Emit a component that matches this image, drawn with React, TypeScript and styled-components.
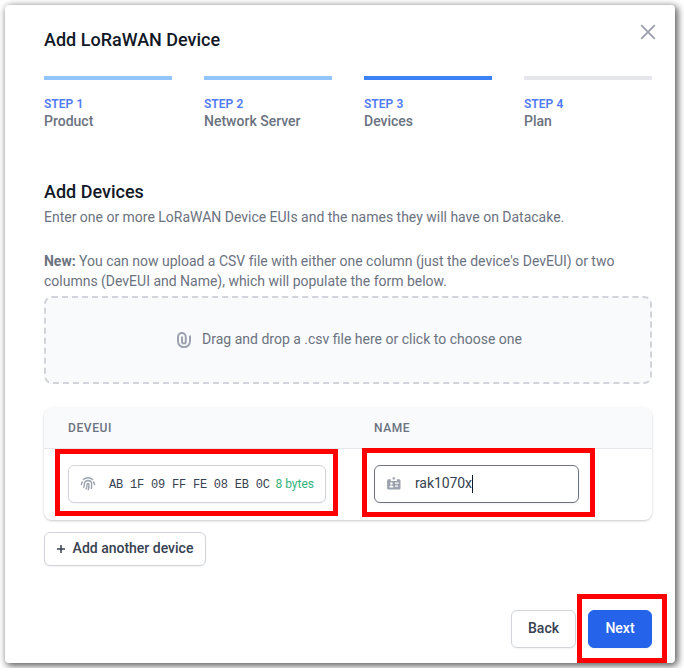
import React from "react";
import styled, { createGlobalStyle } from "styled-components";

const GlobalStyle = createGlobalStyle`
  *, *::before, *::after { box-sizing: border-box; }
  body {
    margin: 0;
    background: #fff;
    color: #6b7280;
    font: 400 14px/20px Roboto, sans-serif;
    overflow: hidden;
  }
`;

const Modal = styled.main`
  position: relative;
  width: 670px;
  height: 658px;
  margin: 5px;
  padding: 25px 23px 0 39px;
  border-radius: 4px;
  background: #fff;
  box-shadow: 2px 2px 7px 1px rgba(0, 0, 0, 0.62);
`;

const Header = styled.header`
  display: flex;
  justify-content: space-between;
  height: 46px;
`;

const Heading = styled.h2`
  margin: 0;
  color: #111827;
  font-size: 18px;
  font-weight: 500;
  line-height: 20px;
`;

const CloseButton = styled.button`
  width: 24px;
  height: 24px;
  margin: -10px -8px 0 0;
  padding: 0;
  border: 0;
  background: none;
  color: #9ca3af;

  svg { display: block; }
`;

const Steps = styled.ol`
  display: grid;
  grid-template-columns: repeat(4, 128px);
  column-gap: 32px;
  margin: 0;
  padding: 0;
  list-style: none;
`;

const stepColors = { done: "#93c5fd", current: "#3b82f6", upcoming: "#e5e7eb" };

const Step = styled.li<{ $state: keyof typeof stepColors }>`
  display: flex;
  flex-direction: column;
  height: 106px;
  padding-top: 16px;
  border-top: 4px solid ${(p) => stepColors[p.$state]};
  font-weight: 500;
  line-height: 18px;
`;

const StepNumber = styled.span`
  color: #4f7bf5;
  font-size: 12px;
  font-weight: 600;
  letter-spacing: 0.05px;
  line-height: 16px;
`;

const Paragraph = styled.p<{ $gap?: number }>`
  margin: ${(p) => p.$gap ?? 0}px 0 0;
  letter-spacing: -0.01px;
  line-height: 20px;
`;

const Dropzone = styled.div`
  display: flex;
  align-items: center;
  justify-content: center;
  width: 608px;
  height: 88px;
  margin-top: 5px;
  padding: 0 0 2px 2px;
  gap: 10px;
  border: 2px dashed #d1d5db;
  border-radius: 8px;
  background: #f9fafb;

  svg { margin-top: 1px; color: #9ca3af; }
`;

const DeviceTable = styled.section`
  width: 608px;
  height: 112px;
  margin-top: 24px;
  border-radius: 8px;
  overflow: hidden;
  box-shadow: 0 1px 3px rgba(0, 0, 0, 0.12), 0 1px 2px rgba(0, 0, 0, 0.1);
`;

const HeadRow = styled.div`
  display: grid;
  grid-template-columns: 306px 1fr;
  height: 41px;
  padding: 0 24px;
  border-bottom: 1px solid #e5e7eb;
  background: #f9fafb;
  font-size: 12px;
  font-weight: 500;
  letter-spacing: 0.6px;
  line-height: 40px;
`;

const DeviceRow = styled.div`
  display: grid;
  grid-template-columns: 258px 205px;
  column-gap: 48px;
  padding: 16px 24px;
`;

const Field = styled.label<{ $focused?: boolean }>`
  display: flex;
  align-items: center;
  height: 38px;
  padding: 0 11px;
  border: 1px solid ${(p) => (p.$focused ? "#6b7280" : "#d1d5db")};
  border-radius: 6px;
  background: #fff;
  box-shadow: 0 1px 2px rgba(0, 0, 0, 0.05);
  color: #374151;

  svg { flex: none; color: #9ca3af; }
`;

const Eui = styled.span`
  width: 167px;
  margin: 1px 0 0 13px;
  font: 12px/20px "Liberation Mono", monospace;
  letter-spacing: -0.21px;
  white-space: pre;
`;

const ByteCount = styled.span`
  color: #31b47d;
  font-size: 12px;
  white-space: nowrap;
`;

const NameValue = styled.span`
  height: 18px;
  margin-left: 13px;
  border-right: 1px solid #111827;
  letter-spacing: -0.1px;
  line-height: 17px;
`;

const Button = styled.button<{ $primary?: boolean; $width: number; $height?: number }>`
  display: flex;
  align-items: center;
  justify-content: center;
  width: ${(p) => p.$width}px;
  height: ${(p) => p.$height ?? 38}px;
  padding: 0 0 2px;
  gap: 8px;
  border: 1px solid ${(p) => (p.$primary ? "#2563eb" : "#d1d5db")};
  border-radius: 6px;
  background: ${(p) => (p.$primary ? "#2563eb" : "#fff")};
  box-shadow: 0 1px 2px rgba(0, 0, 0, 0.05);
  color: ${(p) => (p.$primary ? "#fff" : "#374151")};
  font: 500 14px/20px Roboto, sans-serif;

  svg { margin-top: 2px; }
`;

const AddRow = styled.div`
  padding-top: 12px;
`;

const Footer = styled.footer`
  display: flex;
  justify-content: flex-end;
  gap: 12px;
  width: 608px;
  margin-top: 44px;
`;

const Highlight = styled.div<{ $x: number; $y: number; $w: number; $h: number }>`
  position: absolute;
  left: ${(p) => p.$x}px;
  top: ${(p) => p.$y}px;
  width: ${(p) => p.$w}px;
  height: ${(p) => p.$h}px;
  border: 5px solid #f00;
  pointer-events: none;
`;

const CloseIcon = () => (
  <svg width="24" height="24" viewBox="0 0 24 24" fill="none" stroke="currentColor" strokeWidth="1.9">
    <path d="M5.2 5.2 18.8 18.8M18.8 5.2 5.2 18.8" />
  </svg>
);

const ClipIcon = () => (
  <svg width="16" height="16" viewBox="0 0 16 16" fill="none" stroke="currentColor" strokeWidth="2" strokeLinecap="round">
    <path d="M14 4.2v5.1a6 6 0 0 1-12 0V5a3.9 3.9 0 0 1 7.8 0v4.6a1.9 1.9 0 0 1-3.8 0V5.3" />
  </svg>
);

const FingerprintIcon = () => (
  <svg width="16" height="16" viewBox="0 0 16 16" fill="none" stroke="currentColor" strokeWidth="1.4" strokeLinecap="round">
    <path d="M3.4 3.5a7 7 0 0 1 9.2 0M1.4 8.5a6.8 6.8 0 0 1 1-2.5M14.6 8.5a6.8 6.8 0 0 0-1-2.5M3.7 11.2c.5-1 .7-2 .7-3A3.7 3.7 0 0 1 8 4.5c2.1 0 3.7 1.6 3.7 3.7 0 1.7-.1 2.9-.4 4.2M6.1 12.9c.7-1.4.9-2.8.9-4.5 0-1.3 2-1.3 2 0 0 2-.2 3.7-.8 5.3" />
  </svg>
);

const BadgeIcon = () => (
  <svg width="16" height="16" viewBox="0 0 16 16" fill="currentColor">
    <rect x="6.6" y="1.2" width="2.3" height="2.3" rx=".6" />
    <path fillRule="evenodd" d="M2.7 3.2h2.1v1.7h6V3.2h2.1c1 0 1.6.6 1.6 1.6v7.1c0 1-.6 1.6-1.6 1.6H2.7c-1 0-1.6-.6-1.6-1.6V4.8c0-1 .6-1.6 1.6-1.6ZM3.4 11.5h4c0-1.5-.7-2.1-2-2.1s-2 .6-2 2.1ZM5.4 6.2a1.3 1.3 0 1 0 0 2.6 1.3 1.3 0 0 0 0-2.6ZM9 6.5v1.2h3.7V6.5ZM9 9.5v1.2h3V9.5Z" />
  </svg>
);

const PlusIcon = () => (
  <svg width="8" height="8" viewBox="0 0 8 8" fill="none" stroke="currentColor" strokeWidth="1.5">
    <path d="M4 0v8M0 4h8" />
  </svg>
);

const steps: { label: string; state: keyof typeof stepColors }[] = [
  { label: "Product", state: "done" },
  { label: "Network Server", state: "done" },
  { label: "Devices", state: "current" },
  { label: "Plan", state: "upcoming" },
];

export default function App() {
  return (
    <>
      <GlobalStyle />
      <Modal>
        <Header>
          <Heading>Add LoRaWAN Device</Heading>
          <CloseButton aria-label="Close"><CloseIcon /></CloseButton>
        </Header>
        <Steps>
          {steps.map((step, i) => (
            <Step key={step.label} $state={step.state}>
              <StepNumber>STEP {i + 1}</StepNumber>
              {step.label}
            </Step>
          ))}
        </Steps>
        <Heading>Add Devices</Heading>
        <Paragraph $gap={5}>
          Enter one or more LoRaWAN Device EUIs and the names they will have on Datacake.
        </Paragraph>
        <Paragraph $gap={24}>
          <b>New:</b> You can now upload a CSV file with either one column (just the device's DevEUI) or two
          <br />
          columns (DevEUI and Name), which will populate the form below.
        </Paragraph>
        <Dropzone><ClipIcon />Drag and drop a .csv file here or click to choose one</Dropzone>
        <DeviceTable>
          <HeadRow><span>DEVEUI</span><span>NAME</span></HeadRow>
          <DeviceRow>
            <Field>
              <FingerprintIcon />
              <Eui>AB 1F 09 FF FE 08 EB 0C</Eui>
              <ByteCount>8 bytes</ByteCount>
            </Field>
            <Field $focused>
              <BadgeIcon />
              <NameValue>rak1070x</NameValue>
            </Field>
          </DeviceRow>
        </DeviceTable>
        <AddRow><Button $width={162} $height={34}><PlusIcon />Add another device</Button></AddRow>
        <Footer>
          <Button $width={65}>Back</Button>
          <Button $primary $width={64}>Next</Button>
        </Footer>
        <Highlight $x={50} $y={444} $w={283} $h={67} />
        <Highlight $x={357} $y={443} $w={233} $h={69} />
        <Highlight $x={572} $y={589} $w={90} $h={69} />
      </Modal>
    </>
  );
}
